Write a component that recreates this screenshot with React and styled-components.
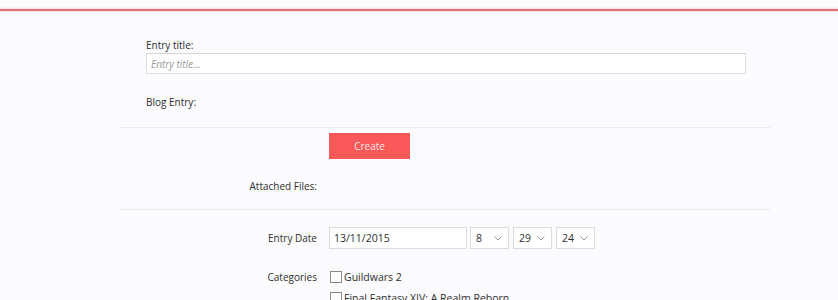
import React from 'react';
import styled, { createGlobalStyle } from 'styled-components';

const GlobalStyle = createGlobalStyle`
  body {
    margin: 0;
    background: #fbfbfd;
    font-family: "Open Sans", "Liberation Sans", sans-serif;
    color: #333;
  }
`;

const TopLine = styled.div`
  margin-top: 9px;
  height: 2px;
  background: #e0727c;
  box-shadow: 0 0 2px 1px rgba(240, 140, 150, 0.35);
`;

const Form = styled.form`
  margin-left: 120px;
  width: 650px;
`;

const Section = styled.div`
  padding: ${p => p.$pad};
  border-bottom: ${p => (p.$last ? 'none' : '1px solid #ececf0')};
`;

const FieldLabel = styled.div`
  font-size: 10px;
  line-height: 14px;
  color: #2e2e2e;
`;

const TitleInput = styled.input`
  box-sizing: border-box;
  display: block;
  width: 600px;
  height: 21px;
  margin: 1px 0 21px;
  padding: 0 4px;
  border: 1px solid #dedee2;
  border-top-color: #d6d6da;
  background: #fff;
  font-family: inherit;
  font-size: 10px;
  outline: none;

  &::placeholder {
    color: #9a9a9a;
    font-style: italic;
  }
`;

const Row = styled.div`
  display: grid;
  grid-template-columns: 197px 1fr;
  column-gap: 12px;
  align-items: ${p => p.$align || 'center'};
  margin-top: ${p => p.$mt || 0}px;
`;

const RowLabel = styled.div`
  text-align: right;
  font-size: 10px;
  line-height: ${p => p.$lh || 14}px;
  color: #2e2e2e;
`;

const CreateButton = styled.button`
  width: 81px;
  height: 26px;
  border: none;
  background: #f95858;
  color: #ffe4e4;
  font-family: inherit;
  font-size: 10px;
  cursor: pointer;
`;

const Controls = styled.div`
  display: flex;
  align-items: center;
  gap: 4px;
`;

const DateInput = styled.input`
  box-sizing: border-box;
  width: 138px;
  height: 22px;
  margin-right: -1px;
  padding: 0 4px;
  border: 1px solid #dcdce0;
  background: #fff;
  font-family: inherit;
  font-size: 10.5px;
  color: #2e2e2e;
  outline: none;
`;

const SelectBox = styled.div`
  box-sizing: border-box;
  width: 39px;
  height: 22px;
  display: flex;
  align-items: center;
  justify-content: space-between;
  padding: 0 6px 0 5px;
  border: 1px solid #dcdce0;
  background: #fff;
  font-size: 10.5px;
  color: #2e2e2e;
`;

const CheckList = styled.div`
  display: flex;
  flex-direction: column;
  gap: 5px;
`;

const CheckItem = styled.label`
  display: flex;
  align-items: center;
  gap: 2px;
  height: 16px;
  font-size: 10.5px;
  color: #2e2e2e;
`;

const Box = styled.span`
  box-sizing: border-box;
  width: 12px;
  height: 12px;
  border: 1px solid #8a8a8a;
  background: #fff;
  margin-left: 1px;
`;

const Chevron = () => (
  <svg width="8" height="5" viewBox="0 0 8 5">
    <path d="M0.5 0.5 L4 4 L7.5 0.5" fill="none" stroke="#888" strokeWidth="0.9" />
  </svg>
);

const Select = ({ value }) => (
  <SelectBox>
    <span>{value}</span>
    <Chevron />
  </SelectBox>
);

export default function App() {
  return (
    <>
      <GlobalStyle />
      <TopLine />
      <Form>
        <Section $pad="27px 24px 18px 26px">
          <FieldLabel>Entry title:</FieldLabel>
          <TitleInput placeholder="Entry title..." />
          <FieldLabel>Blog Entry:</FieldLabel>
        </Section>
        <Section $pad="5px 0 16px">
          <Row>
            <div />
            <CreateButton type="button">Create</CreateButton>
          </Row>
          <Row $mt={20}>
            <RowLabel>Attached Files:</RowLabel>
            <div />
          </Row>
        </Section>
        <Section $pad="17px 0 0" $last>
          <Row>
            <RowLabel>Entry Date</RowLabel>
            <Controls>
              <DateInput defaultValue="13/11/2015" />
              <Select value="8" />
              <Select value="29" />
              <Select value="24" />
            </Controls>
          </Row>
          <Row $mt={20} $align="start">
            <RowLabel $lh={16}>Categories</RowLabel>
            <CheckList>
              <CheckItem><Box />Guildwars 2</CheckItem>
              <CheckItem><Box />Final Fantasy XIV: A Realm Reborn</CheckItem>
            </CheckList>
          </Row>
        </Section>
      </Form>
    </>
  );
}
